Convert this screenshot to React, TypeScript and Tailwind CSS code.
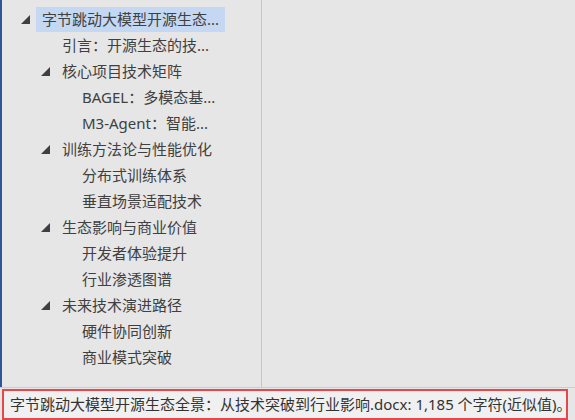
import React from "react";

type Item = { text: string; level: number; toggle?: boolean; selected?: boolean };

const items: Item[] = [
  { text: "字节跳动大模型开源生态...", level: 0, toggle: true, selected: true },
  { text: "引言：开源生态的技...", level: 1 },
  { text: "核心项目技术矩阵", level: 1, toggle: true },
  { text: "BAGEL：多模态基...", level: 2 },
  { text: "M3-Agent：智能...", level: 2 },
  { text: "训练方法论与性能优化", level: 1, toggle: true },
  { text: "分布式训练体系", level: 2 },
  { text: "垂直场景适配技术", level: 2 },
  { text: "生态影响与商业价值", level: 1, toggle: true },
  { text: "开发者体验提升", level: 2 },
  { text: "行业渗透图谱", level: 2 },
  { text: "未来技术演进路径", level: 1, toggle: true },
  { text: "硬件协同创新", level: 2 },
  { text: "商业模式突破", level: 2 },
];

const indent = ["pl-[19px]", "pl-[39px]", "pl-[59px]"];

function Tri() {
  return (
    <svg width="9" height="9" viewBox="0 0 9 9" className="shrink-0">
      <polygon points="9,0 9,9 0,9" fill="#3f3f3f" />
    </svg>
  );
}

export default function App() {
  const font = { fontFamily: '"Noto Sans", "Noto Sans CJK SC", sans-serif' };
  return (
    <div className="w-[575px] h-[420px] flex flex-col bg-[#e6e6e6] overflow-hidden" style={font}>
      <div className="flex-1 flex border-l-2 border-[#2b579a] min-h-0">
        <div className="w-[260px] border-r border-[#c6c6c6] pt-[6px]">
          {items.map((it, i) => (
            <div key={i} className={`flex h-[26px] ${indent[it.level]}`}>
              <div className="w-[9px] flex items-center shrink-0 mt-[1px]">{it.toggle ? <Tri /> : null}</div>
              <div
                className={`ml-[6px] px-[6px] h-[25px] mt-[1px] flex items-center whitespace-nowrap text-[15px] leading-[25px] text-[#404040] ${
                  it.selected ? "bg-[#c4d8f3] w-[189px] text-[#333333]" : ""
                }`}
              >
                {it.text}
              </div>
            </div>
          ))}
        </div>
        <div className="flex-1" />
      </div>
      <div className="h-[33px] border-t border-[#cdcdcd] pt-[1px] shrink-0">
        <div className="ml-[2px] w-[566px] h-[31px] border-2 border-[#e8464a] bg-[#f0f0f0] flex items-center pl-[6px] whitespace-nowrap text-[15px] text-[#333333]">
          字节跳动大模型开源生态全景：从技术突破到行业影响.docx: 1,185 个字符(近似值)。
        </div>
      </div>
    </div>
  );
}
